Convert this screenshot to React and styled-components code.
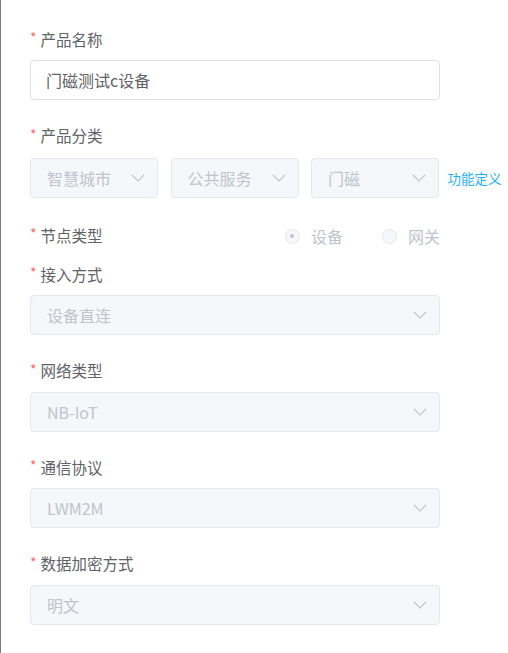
import React from "react";
import styled, { createGlobalStyle } from "styled-components";

const GlobalStyle = createGlobalStyle`
  html, body {
    margin: 0;
    padding: 0;
    background: #ffffff;
  }
  body {
    font-family: "Noto Sans CJK SC", "Liberation Sans", sans-serif;
  }
`;

const Page = styled.div`
  min-height: 653px;
  border-left: 1px solid #7b7b7b;
  box-sizing: border-box;
  padding: 30px 0 0 29px;
`;

const Form = styled.div`
  width: 410px;
`;

const Item = styled.div`
  margin-bottom: ${(p) => (p.$tight ? "17px" : "26.5px")};
`;

const Label = styled.div`
  display: flex;
  align-items: center;
  height: 20px;
  box-sizing: border-box;
  padding-bottom: 3px;
  margin-bottom: ${(p) => (p.$inline ? "0" : p.$gap || "10px")};
  font-size: 15.5px;
  color: #606266;
  white-space: nowrap;
`;

const Star = styled.span`
  color: #f56c6c;
  font-size: 14px;
  margin-right: 4px;
  margin-top: -3px;
`;

const Input = styled.div`
  height: 40px;
  box-sizing: border-box;
  border: 1px solid #dcdfe6;
  border-radius: 4px;
  padding: 0 15px 1px;
  display: flex;
  align-items: center;
  font-size: 16px;
  color: #606266;
`;

const Select = styled.div`
  height: 40px;
  width: ${(p) => p.$width || "100%"};
  flex: none;
  box-sizing: border-box;
  border: 1px solid #e4e7ed;
  background: #f5f7fa;
  border-radius: 4px;
  padding: 0 12px 0 16px;
  display: flex;
  align-items: center;
  justify-content: space-between;
  font-size: 16px;
  color: #c0c4cc;
`;

const SelectRow = styled.div`
  display: flex;
  align-items: center;
  gap: 12.5px;
`;

const Link = styled.a`
  font-size: 13.5px;
  color: #1fb0ef;
  text-decoration: none;
  white-space: nowrap;
  margin-left: -4px;
`;

const InlineRow = styled.div`
  display: flex;
  align-items: center;
  justify-content: space-between;
  height: 24px;
`;

const RadioGroup = styled.div`
  display: flex;
  align-items: center;
  gap: 39px;
`;

const Radio = styled.label`
  display: flex;
  align-items: center;
  gap: 11px;
  font-size: 16px;
  color: #c0c4cc;
`;

const RadioDot = styled.span`
  width: 15px;
  height: 15px;
  box-sizing: border-box;
  border-radius: 50%;
  border: 1px solid #e4e7ed;
  background: #f5f7fa;
  display: flex;
  align-items: center;
  justify-content: center;
  &::after {
    content: "";
    width: 4px;
    height: 4px;
    border-radius: 50%;
    background: ${(p) => (p.$checked ? "#c0c4cc" : "transparent")};
  }
`;

const Arrow = () => (
  <svg width="14" height="8" viewBox="0 0 14 8" fill="none">
    <path d="M1 1l6 6 6-6" stroke="#c0c4cc" strokeWidth="1.1" />
  </svg>
);

const FieldLabel = ({ children, inline, gap }) => (
  <Label $inline={inline} $gap={gap}>
    <Star>*</Star>
    {children}
  </Label>
);

const fields = [
  { label: "接入方式", value: "设备直连" },
  { label: "网络类型", value: "NB-IoT" },
  { label: "通信协议", value: "LWM2M" },
  { label: "数据加密方式", value: "明文" },
];

export default function App() {
  return (
    <>
      <GlobalStyle />
      <Page>
        <Form>
          <Item>
            <FieldLabel>产品名称</FieldLabel>
            <Input>门磁测试c设备</Input>
          </Item>
          <Item>
            <FieldLabel gap="11px">产品分类</FieldLabel>
            <SelectRow>
              {["智慧城市", "公共服务", "门磁"].map((v) => (
                <Select key={v} $width="128px">
                  {v}
                  <Arrow />
                </Select>
              ))}
              <Link href="#">功能定义</Link>
            </SelectRow>
          </Item>
          <Item $tight>
            <InlineRow>
              <FieldLabel inline>节点类型</FieldLabel>
              <RadioGroup>
                <Radio>
                  <RadioDot $checked />
                  设备
                </Radio>
                <Radio>
                  <RadioDot />
                  网关
                </Radio>
              </RadioGroup>
            </InlineRow>
          </Item>
          {fields.map((f) => (
            <Item key={f.label}>
              <FieldLabel>{f.label}</FieldLabel>
              <Select>
                {f.value}
                <Arrow />
              </Select>
            </Item>
          ))}
        </Form>
      </Page>
    </>
  );
}
